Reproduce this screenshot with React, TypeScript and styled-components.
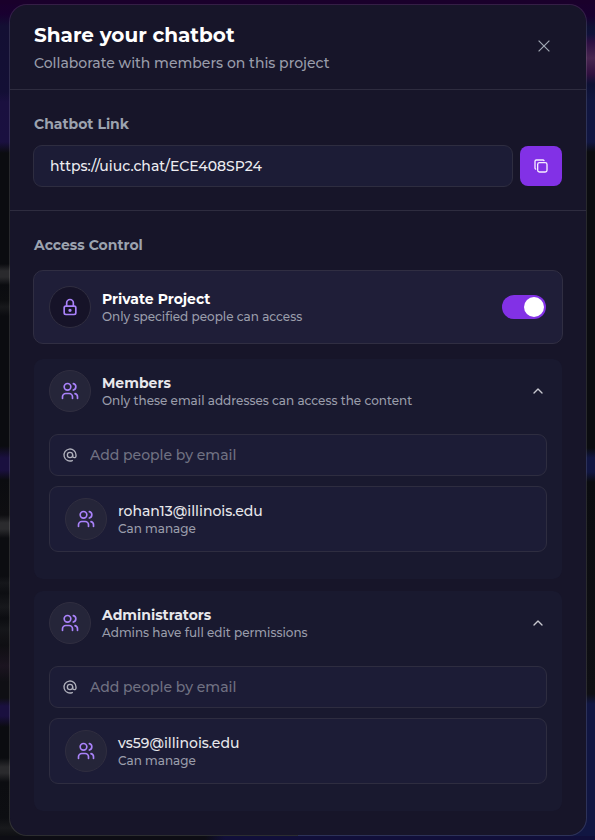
import React from "react";
import styled, { createGlobalStyle } from "styled-components";
import { TbAt, TbChevronUp, TbCopy, TbLock, TbUsers } from "react-icons/tb";

const GlobalStyle = createGlobalStyle`
  *, *::before, *::after { box-sizing: border-box; }
  body { margin: 0; background: #0b0c10; }
  button, input { font: inherit; }
`;

const leftEdge = `linear-gradient(180deg,
  #1a002b 0, #190030 14px, #130f33 26px, #130f35 92px, #1a103f 102px, #1a1040 142px,
  #0b0c10 153px, #0b0c10 264px, #2a2a2d 271px, #2a2a2d 277px, #0b0c10 285px,
  #0d0e11 300px, #17181b 307px, #0b0c10 316px, #0b0c10 446px, #1a103f 458px, #1a103f 470px,
  #0b0c10 480px, #0e0e11 515px, #2b2b2e 523px, #2b2b2e 529px, #0c0d11 538px,
  #0c0d11 576px, #15161a 583px, #0d0e12 593px, #17181c 607px, #0c0d11 618px, #15161a 629px,
  #0f0f13 645px, #1b1420 666px, #0f0f14 682px, #0f0f14 698px, #1a103f 706px, #1a103f 716px,
  #0b0c10 727px, #0b0c10 758px, #2a2a2d 767px, #2a2a2d 773px, #0c0d11 782px,
  #0d0e12 818px, #18191c 828px, #0c0d11 838px)`;

const rightEdge = `linear-gradient(180deg,
  #1a002b 0, #190030 16px, #0f1134 27px, #10123a 34px, #2c0f42 42px, #482650 58px,
  #30103f 74px, #0e1134 84px, #11163f 100px, #111642 142px, #0b0c10 152px,
  #0b0c10 448px, #111642 458px, #111642 472px, #0b0c10 482px, #0f0f14 694px,
  #111642 704px, #111642 840px)`;

const Page = styled.main`
  width: 595px;
  height: 840px;
  padding: 4px 8px 4px 9px;
  overflow: hidden;
  background:
    linear-gradient(#1a002b, #1a002b) top / 100% 4px no-repeat,
    linear-gradient(90deg, #0d0d14 0 205px, #110f3a 225px 100%) bottom / 100% 4px no-repeat,
    ${leftEdge} left / 50% 100% no-repeat,
    ${rightEdge} right / 50% 100% no-repeat;
  font-family: Montserrat, Inter, "Open Sans", sans-serif;
  font-weight: 500;
  color: #fff;
`;

const Modal = styled.section`
  height: 832px;
  border: 1px solid rgba(255, 255, 255, 0.12);
  border-radius: 18px;
  background: #171529;
  background-clip: padding-box;
  overflow: hidden;
`;

const Header = styled.header`
  display: flex;
  justify-content: space-between;
  height: 85px;
  padding: 17px 24px 0;
  border-bottom: 1px solid #2e2c3f;
`;

const Title = styled.h1`
  margin: 0;
  font-size: 20px;
  line-height: 26px;
  font-weight: 700;
  white-space: nowrap;
`;

const Subtitle = styled.p`
  margin: 5px 0 0;
  font-size: 14px;
  line-height: 20px;
  color: #9a9dab;
  white-space: nowrap;
`;

const CloseButton = styled.button`
  display: grid;
  place-items: center;
  width: 36px;
  height: 37px;
  margin-top: 6px;
  padding: 0;
  border: 0;
  background: none;
  color: #9ca3af;
`;

const LinkSection = styled.section`
  height: 121px;
  padding: 24px 24px 0 23px;
  border-bottom: 1px solid #2e2c3f;
`;

const AccessSection = styled.section`
  padding: 24px 23px 0;
`;

const SectionLabel = styled.h2`
  margin: 0 0 11px 1px;
  font-size: 14px;
  line-height: 20px;
  font-weight: 700;
  color: #9ca3af;
`;

const LinkRow = styled.div`
  display: flex;
  align-items: center;
  gap: 7px;
`;

const LinkInput = styled.input`
  flex: 1;
  min-width: 0;
  height: 42px;
  padding: 0 16px;
  border: 1px solid #2e2d40;
  border-radius: 9px;
  outline: 0;
  background: #1c1c36;
  color: #ededf1;
  font-size: 14px;
`;

const CopyButton = styled.button`
  display: grid;
  place-items: center;
  width: 42px;
  height: 40px;
  padding: 0;
  border: 0;
  border-radius: 8px;
  background: #8231e6;
  color: #f6edff;
`;

const PrivacyCard = styled.div`
  display: flex;
  align-items: center;
  height: 74px;
  margin-top: 15px;
  padding: 0 16px 0 15px;
  border: 1px solid #302e42;
  border-radius: 10px;
  background: #1f1e38;
`;

const Group = styled.section<{ $gap: number }>`
  height: 220px;
  margin: ${(p) => p.$gap}px 1px 0;
  padding: 11px 15px 0;
  border-radius: 9px;
  background: #19192f;
`;

const GroupHeader = styled.div`
  display: flex;
  align-items: center;
  height: 42px;
`;

const Avatar = styled.span<{ $dark?: boolean }>`
  display: grid;
  place-items: center;
  flex: none;
  width: 42px;
  height: 42px;
  margin-right: 11px;
  border: 1px solid #302e40;
  border-radius: 50%;
  background: ${(p) => (p.$dark ? "#161328" : "#252539")};
  color: #a982fa;
`;

const Copy = styled.div`
  flex: 1;
  min-width: 0;
  white-space: nowrap;
`;

const Name = styled.div<{ $tone?: string }>`
  font-size: 14px;
  line-height: 18px;
  font-weight: 700;
  color: ${(p) => p.$tone ?? "#e8e8ec"};
`;

const Email = styled(Name)`
  font-weight: 500;
`;

const Note = styled.div`
  font-size: 12px;
  line-height: 17px;
  color: #9a9dab;
`;

const Toggle = styled.button`
  display: flex;
  justify-content: flex-end;
  align-items: center;
  width: 44px;
  height: 24px;
  padding: 0 2px;
  border: 0;
  border-radius: 12px;
  background: #8231e6;
`;

const Knob = styled.span`
  width: 20px;
  height: 20px;
  border-radius: 50%;
  background: #fff;
`;

const Chevron = styled.span`
  display: grid;
  padding-right: 1px;
  color: #c8c8d0;
`;

const InviteField = styled.label`
  display: flex;
  align-items: center;
  gap: 12px;
  height: 42px;
  margin-top: 22px;
  padding: 0 12px;
  border: 1px solid #2e2d40;
  border-radius: 9px;
  background: #1c1c36;
  color: #b0b1bc;
`;

const InviteInput = styled.input`
  flex: 1;
  min-width: 0;
  padding: 0;
  border: 0;
  outline: 0;
  background: none;
  color: #fff;
  font-size: 14px;
  &::placeholder { color: #707182; opacity: 1; }
`;

const PersonCard = styled.div`
  display: flex;
  align-items: center;
  height: 66px;
  margin-top: 10px;
  padding: 0 15px;
  border: 1px solid #2e2d40;
  border-radius: 9px;
  background: #1c1c36;
`;

type PeopleProps = { title: string; note: string; email: string; gap: number };

function PeopleGroup({ title, note, email, gap }: PeopleProps) {
  return (
    <Group $gap={gap}>
      <GroupHeader>
        <Avatar><TbUsers size={20} /></Avatar>
        <Copy>
          <Name>{title}</Name>
          <Note>{note}</Note>
        </Copy>
        <Chevron><TbChevronUp size={16} /></Chevron>
      </GroupHeader>
      <InviteField>
        <TbAt size={16} />
        <InviteInput placeholder="Add people by email" />
      </InviteField>
      <PersonCard>
        <Avatar><TbUsers size={20} /></Avatar>
        <Copy>
          <Email>{email}</Email>
          <Note>Can manage</Note>
        </Copy>
      </PersonCard>
    </Group>
  );
}

export default function App() {
  return (
    <Page>
      <GlobalStyle />
      <Modal>
        <Header>
          <div>
            <Title>Share your chatbot</Title>
            <Subtitle>Collaborate with members on this project</Subtitle>
          </div>
          <CloseButton aria-label="Close">
            <svg width="12" height="13" viewBox="0 0 12 13" fill="none" stroke="currentColor" strokeWidth="1.25">
              <path d="M.6.6l10.8 10.8M11.4.6L.6 11.4" />
            </svg>
          </CloseButton>
        </Header>
        <LinkSection>
          <SectionLabel>Chatbot Link</SectionLabel>
          <LinkRow>
            <LinkInput readOnly value="https://uiuc.chat/ECE408SP24" />
            <CopyButton aria-label="Copy link"><TbCopy size={16} /></CopyButton>
          </LinkRow>
        </LinkSection>
        <AccessSection>
          <SectionLabel>Access Control</SectionLabel>
          <PrivacyCard>
            <Avatar $dark><TbLock size={20} /></Avatar>
            <Copy>
              <Name $tone="#fff">Private Project</Name>
              <Note>Only specified people can access</Note>
            </Copy>
            <Toggle role="switch" aria-checked="true" aria-label="Private project"><Knob /></Toggle>
          </PrivacyCard>
          <PeopleGroup
            gap={15}
            title="Members"
            note="Only these email addresses can access the content"
            email="rohan13@illinois.edu"
          />
          <PeopleGroup
            gap={12}
            title="Administrators"
            note="Admins have full edit permissions"
            email="vs59@illinois.edu"
          />
        </AccessSection>
      </Modal>
    </Page>
  );
}
